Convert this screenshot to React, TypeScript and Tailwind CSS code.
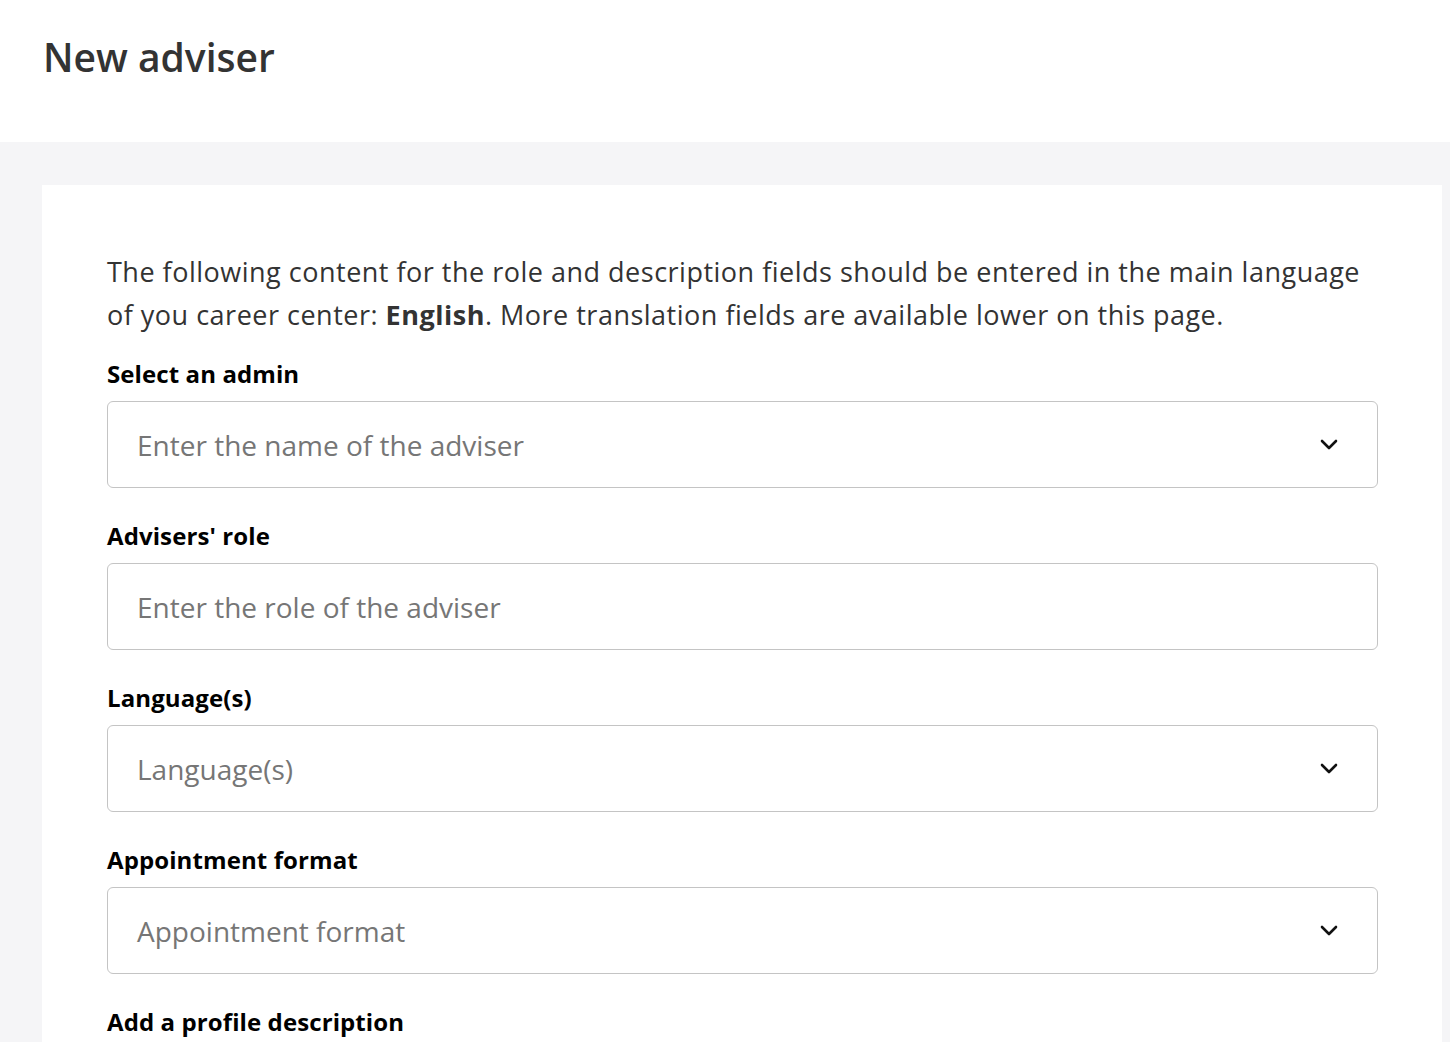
const font = { fontFamily: '"Open Sans", "Noto Sans", sans-serif' };

function Chevron() {
  return (
    <svg width="18" height="11" viewBox="0 0 18 11" fill="none" className="shrink-0">
      <path d="M2 2l7 7 7-7" stroke="#111" strokeWidth="2.6" strokeLinecap="round" strokeLinejoin="round" />
    </svg>
  );
}

function Field({ label, placeholder, select }: { label: string; placeholder: string; select?: boolean }) {
  return (
    <div className="mb-[30px]">
      <label className="block text-[24px] font-bold leading-[36px] tracking-[0.1px] text-black mb-[9px]">{label}</label>
      <div className="flex h-[87px] items-center justify-between rounded-[6px] border border-[#c4c4c4] bg-white pl-[29px] pr-[39px]">
        <span className="text-[28px] text-[#767676]">{placeholder}</span>
        {select && <Chevron />}
      </div>
    </div>
  );
}

export default function App() {
  return (
    <div style={font} className="min-h-screen bg-[#f5f5f7]">
      <header className="h-[142px] bg-white px-[43px] pt-[30px]">
        <h1 className="text-[39px] font-semibold leading-[54px] text-[#333]">New adviser</h1>
      </header>
      <main className="pl-[42px] pr-[8px] pt-[43px]">
        <section className="bg-white pl-[65px] pr-[64px] pt-[65px] pb-10">
          <p className="text-[27px] leading-[43px] tracking-[0.5px] text-[#333] mb-[20px]">
            The following content for the role and description fields should be entered in the main language of you
            career center: <strong className="font-bold">English</strong>. More translation fields are available lower
            on this page.
          </p>
          <Field label="Select an admin" placeholder="Enter the name of the adviser" select />
          <Field label="Advisers' role" placeholder="Enter the role of the adviser" />
          <Field label="Language(s)" placeholder="Language(s)" select />
          <Field label="Appointment format" placeholder="Appointment format" select />
          <label className="block text-[24px] font-bold leading-[36px] tracking-[0.1px] text-black">
            Add a profile description
          </label>
        </section>
      </main>
    </div>
  );
}
